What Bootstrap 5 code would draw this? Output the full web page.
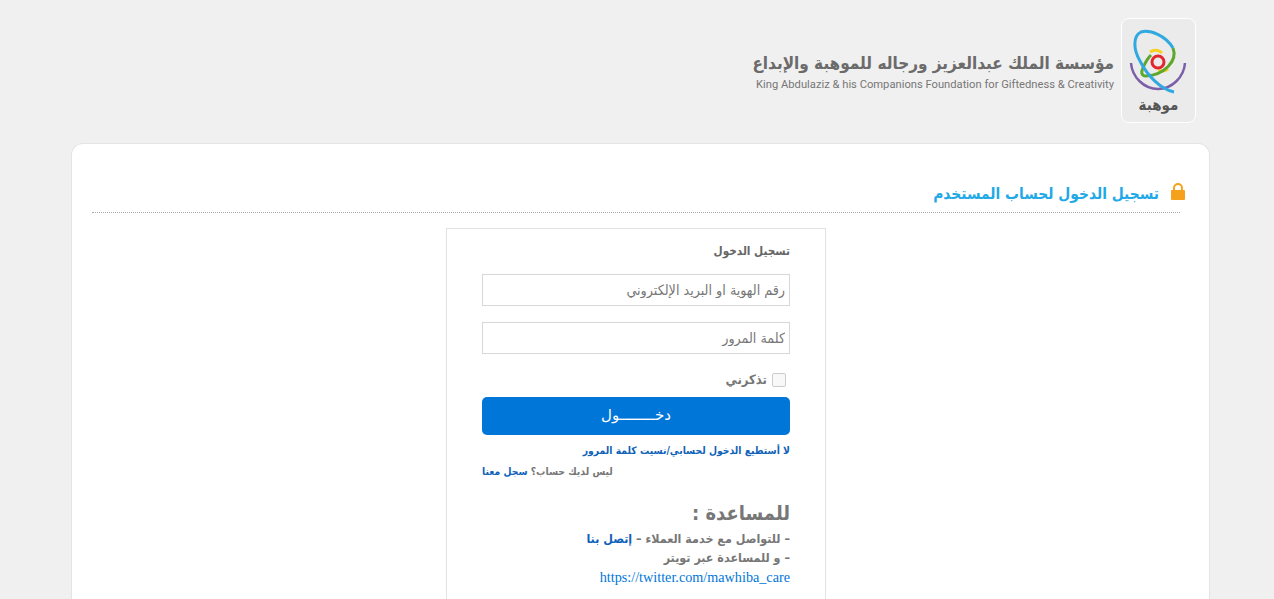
<!DOCTYPE html>
<html lang="ar" dir="rtl">
<head>
    <meta charset="UTF-8">
    <meta name="viewport" content="width=device-width, initial-scale=1.0">
    <title>تسجيل الدخول</title>
    <link href="https://cdn.jsdelivr.net/npm/bootstrap@5.3.0/dist/css/bootstrap.min.css" rel="stylesheet">
    <style>
        html, body { height: 599px; overflow: hidden; }
        body {
            background-color: #f0f0f0;
            font-family: "DejaVu Sans Condensed", "DejaVu Sans", sans-serif;
            color: #666;
        }
        .page-wrap { padding: 18px 64px 0 71px; }
        .site-head { height: 125px; padding-right: 14px; }
        .logo-tile {
            width: 75px;
            height: 105px;
            background: #ebebeb;
            border: 1px solid #fff;
            border-radius: 8px;
        }
        .logo-tile svg { display: block; }
        .logo-name { font-size: 15px; font-weight: 700; line-height: 16px; color: #555; text-align: center; }
        .org-names { margin-right: 7px; padding-top: 33px; }
        .org-ar { font-size: 17px; font-weight: 700; line-height: 24px; color: #6b6b6b; white-space: nowrap; }
        .org-en { font-family: Roboto, sans-serif; font-size: 11.2px; line-height: 20px; color: #777; white-space: nowrap; direction: ltr; text-align: right; }
        .main-panel {
            background: #fff;
            border: 1px solid #e4e4e4;
            border-bottom: 0;
            border-radius: 12px 12px 0 0;
            height: 456px;
            padding: 30px 29px 0 20px;
        }
        .panel-title {
            height: 39px;
            margin-right: -5px;
            position: relative;
            color: #1fa9e6;
            font-size: 15.4px;
            font-weight: 700;
            line-height: 41px;
            white-space: nowrap;
        }
        .panel-title::after {
            content: "";
            position: absolute;
            left: 0;
            right: 5px;
            bottom: 0;
            border-bottom: 1px dotted #aaa;
        }
        .panel-title svg { margin-left: 12px; margin-bottom: 6px; }
        .login-box {
            width: 380px;
            margin: 15px auto 0;
            border: 1px solid #e2e2e2;
            border-bottom: 0;
            height: 371px;
            padding: 13px 35px 0 35px;
        }
        .login-head { font-size: 11.7px; font-weight: 700; line-height: 18px; color: #666; margin-bottom: 14px; }
        .login-input.form-control {
            height: 32px;
            padding: 0 4px;
            border: 1px solid #d8d8d8;
            border-radius: 0;
            font-family: "DejaVu Sans Condensed", "DejaVu Sans", serif;
            font-size: 14.2px;
            margin-bottom: 16px;
        }
        .login-input.form-control::placeholder { color: #777; opacity: 1; }
        .remember-row { height: 19px; margin: 16px 0 8px; font-size: 13px; font-weight: 700; line-height: 19px; color: #777; }
        .remember-row .form-check-input {
            width: 14px;
            height: 14px;
            margin: 0 4px 0 5px;
            border: 1px solid #ccc;
            border-radius: 2px;
            background-color: #f8f8f8;
        }
        .login-btn.btn {
            display: block;
            width: 100%;
            height: 38px;
            padding: 0 0 2px;
            background: #0076d9;
            border: 0;
            border-radius: 5px;
            color: #fff;
            font-family: "Liberation Serif", "DejaVu Sans", serif;
            font-size: 15px;
        }
        .small-link { font-size: 10.3px; font-weight: 700; line-height: 16px; }
        .small-link a { color: #0f62b8; text-decoration: none; }
        .first-link { margin-top: 7px; }
        .second-link { margin-top: 5px; color: #777; text-align: left; }
        .help-title { font-size: 20px; font-weight: 700; line-height: 28px; color: #777; margin: 20px 0 2px; }
        .help-line { font-size: 12.4px; font-weight: 700; line-height: 19px; color: #777; }
        .help-line a { color: #0f62b8; text-decoration: none; }
        .help-url { font-family: "Liberation Serif", serif; font-size: 14.2px; line-height: 20px; direction: ltr; text-align: right; }
        .help-url a { color: #0076d9; text-decoration: none; }
    </style>
</head>
<body>
<div class="page-wrap">
    <div class="site-head d-flex align-items-start">
        <div class="logo-tile flex-shrink-0">
            <svg width="73" height="78" viewBox="0 0 73 78" fill="none">
                <path d="M9 44 C10 58 22 70 36 70 C50 70 62 58 63 44" stroke="#7b5fa8" stroke-width="2.5"/>
                <path d="M28 33 C32 30 37 31 40 34 M46 50 C43 53 38 52 36 51" stroke="#f4d21f" stroke-width="3"/>
                <path d="M51 29 C56 42 42 56 24 57 C19 57 19 53 21 49 C23 44 26 39 29 36" stroke="#5da82c" stroke-width="3"/>
                <path d="M51 29 C44 17 28 10 19 13 C11 17 11 30 18 42 C25 56 38 70 52 73" stroke="#2fa9e0" stroke-width="3"/>
                <circle cx="36" cy="43" r="6" stroke="#e3262e" stroke-width="3"/>
            </svg>
            <div class="logo-name">موهبة</div>
        </div>
        <div class="org-names">
            <div class="org-ar">مؤسسة الملك عبدالعزيز ورجاله للموهبة والإبداع</div>
            <div class="org-en">King Abdulaziz &amp; his Companions Foundation for Giftedness &amp; Creativity</div>
        </div>
    </div>
    <div class="main-panel">
        <div class="panel-title">
            <svg width="14" height="17" viewBox="0 0 14 17"><path d="M3 8 V5 a4 4 0 0 1 8 0 V8" fill="none" stroke="#f5a11c" stroke-width="2"/><rect y="7" width="14" height="10" rx="1" fill="#f5a11c"/></svg>تسجيل الدخول لحساب المستخدم
        </div>
        <div class="login-box">
            <div class="login-head">تسجيل الدخول</div>
            <form>
                <input type="text" class="form-control login-input" placeholder="رقم الهوية او البريد الإلكتروني">
                <input type="password" class="form-control login-input" placeholder="كلمة المرور">
                <div class="remember-row d-flex align-items-center">
                    <input type="checkbox" class="form-check-input" id="remember">
                    <label for="remember">تذكرني</label>
                </div>
                <button type="button" class="btn login-btn">دخــــــــول</button>
            </form>
            <div class="small-link first-link"><a href="#">لا أستطيع الدخول لحسابي/نسيت كلمة المرور</a></div>
            <div class="small-link second-link">ليس لديك حساب؟ <a href="#">سجل معنا</a></div>
            <div class="help-title">للمساعدة :</div>
            <div class="help-line">– للتواصل مع خدمة العملاء – <a href="#">إتصل بنا</a></div>
            <div class="help-line">– و للمساعدة عبر تويتر</div>
            <div class="help-url"><a href="#">https://twitter.com/mawhiba_care</a></div>
        </div>
    </div>
</div>
<script src="https://cdn.jsdelivr.net/npm/bootstrap@5.3.0/dist/js/bootstrap.bundle.min.js"></script>
</body>
</html>
